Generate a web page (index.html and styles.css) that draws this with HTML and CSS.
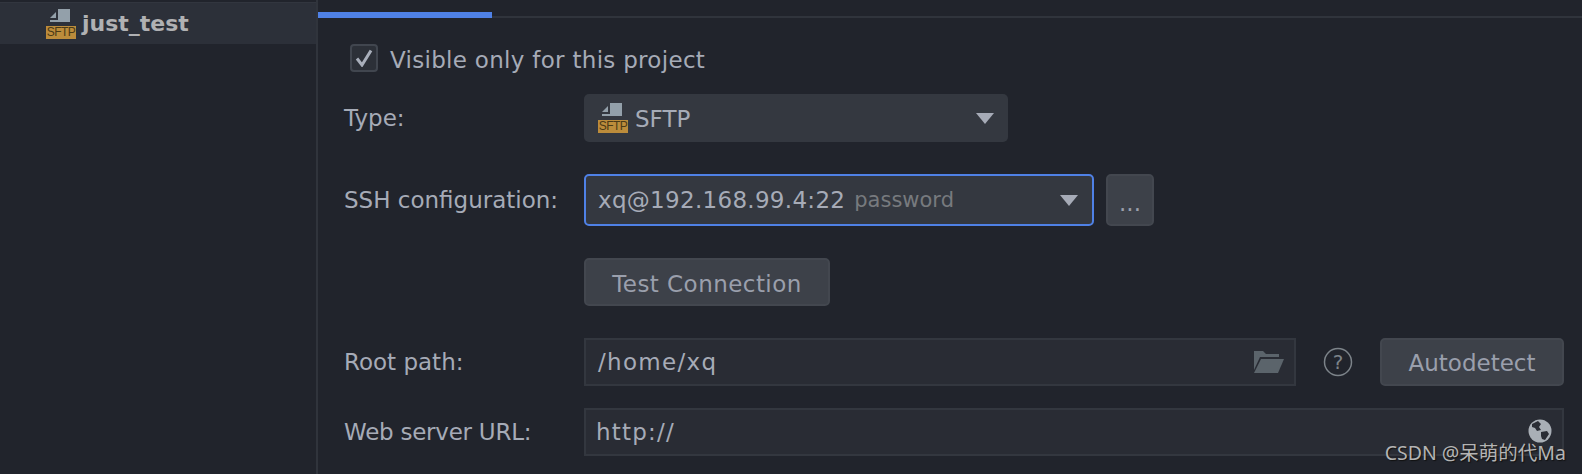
FILE: index.html
```html
<!DOCTYPE html>
<html lang="en">

<head>
    <meta charset="UTF-8" />
    <meta name="viewport" content="width=device-width, initial-scale=1.0" />
    <title>Deployment - just_test</title>
    <link rel="stylesheet" href="styles.css">
</head>

<body>
    <div class="window">
        <aside class="sidebar">
            <div class="server-row">
                <div class="icon-sftp">
                    <svg class="icon-doc" width="20" height="13" viewBox="0 0 20 13">
                        <path fill="#93a0aa" d="M8 0h12v13H0v-2h8z" />
                        <path fill="#93a0aa" d="M0 9l6-6v6z" />
                    </svg>
                    <span class="badge">SFTP</span>
                </div>
                <span class="server-name">just_test</span>
            </div>
        </aside>

        <main class="panel">
            <div class="tabs">
                <div class="tab-active"></div>
            </div>

            <div class="form">
                <label class="visible-row">
                    <span class="checkbox">
                        <svg width="18" height="18" viewBox="0 0 18 18">
                            <path d="M2 9.500l5 6.500L16 1.500" fill="none" stroke="#a9afbb" stroke-width="3" />
                        </svg>
                    </span>
                    <span class="visible-text">Visible only for this project</span>
                </label>

                <div class="row row-type">
                    <span class="label">Type:</span>
                    <div class="select select-type">
                        <div class="icon-sftp">
                            <svg class="icon-doc" width="20" height="13" viewBox="0 0 20 13">
                                <path fill="#93a0aa" d="M8 0h12v13H0v-2h8z" />
                                <path fill="#93a0aa" d="M0 9l6-6v6z" />
                            </svg>
                            <span class="badge">SFTP</span>
                        </div>
                        <span class="type-text">SFTP</span>
                        <span class="arrow"></span>
                    </div>
                </div>

                <div class="row row-ssh">
                    <span class="label">SSH configuration:</span>
                    <div class="select select-ssh">
                        <span class="host">xq@192.168.99.4:22</span>
                        <span class="muted">password</span>
                        <span class="arrow"></span>
                    </div>
                    <button class="btn btn-more">...</button>
                </div>

                <div class="row row-test">
                    <span class="label"></span>
                    <button class="btn btn-test">Test Connection</button>
                </div>

                <div class="row row-root">
                    <span class="label">Root path:</span>
                    <div class="input input-root">
                        <span class="path">/home/xq</span>
                        <svg class="field-icon" width="30" height="22" viewBox="0 0 30 22">
                            <path fill="#5b646b" d="M0 0h9l3 3h13v3H6L0 19z" />
                            <path fill="#5b646b" d="M7 8h23l-6 14H0z" />
                        </svg>
                    </div>
                    <svg class="help" width="30" height="30" viewBox="0 0 30 30">
                        <circle cx="15" cy="15" r="13.500" fill="none" stroke="#7c8389" stroke-width="1.500" />
                        <text x="15" y="22" text-anchor="middle" class="help-text">?</text>
                    </svg>
                    <button class="btn btn-auto">Autodetect</button>
                </div>

                <div class="row row-web">
                    <span class="label label-web">Web server URL:</span>
                    <div class="input input-web">
                        <span class="url">http://</span>
                        <svg class="field-icon globe" width="24" height="24" viewBox="0 0 24 24">
                            <circle cx="12" cy="12" r="11.500" fill="#a9afb6" />
                            <path fill="#2a2d35" d="M4 5l6-3 3 3-2 3 2 3-4 1-2-3-3-1zM13 13l6-1 2 3-4 6-3-1-1-3z" />
                        </svg>
                    </div>
                </div>
            </div>
        </main>
    </div>

    <div class="watermark">CSDN @呆萌的代Ma</div>
</body>

</html>
```

FILE: styles.css
```css
* {
    box-sizing: border-box;
}

html,
body {
    margin: 0;
    height: 100%;
    overflow: hidden;
}

body {
    background-color: #21242c;
    color: #a6abb7;
    font-family: "DejaVu Sans", sans-serif;
    font-size: 23px;
}

.window {
    display: flex;
    height: 474px;
}

/* left tree */
.sidebar {
    width: 318px;
    flex-shrink: 0;
    padding-top: 2px;
    border-right: 2px solid #30343c;
}

.server-row {
    display: flex;
    align-items: center;
    gap: 6px;
    height: 42px;
    padding-left: 46px;
    background-color: #2c3039;
    border-top: 1px solid #32363f;
}

/* server type icon: sheet above an orange tag */
.icon-sftp {
    display: flex;
    flex-direction: column;
    align-items: flex-end;
    justify-content: space-between;
    width: 30px;
    height: 30px;
    flex-shrink: 0;
}

.icon-doc {
    display: block;
    margin-right: 6px;
}

.badge {
    width: 30px;
    height: 13px;
    background-color: #bc8c3b;
    color: #4a3a17;
    font-family: "Liberation Sans", sans-serif;
    font-size: 12px;
    letter-spacing: -0.500px;
    line-height: 13px;
    text-align: center;
}

.server-name {
    font-weight: bold;
    font-size: 22px;
    color: #b0b1b3;
}

/* right side */
.panel {
    flex: 1;
    min-width: 0;
}

.tabs {
    height: 18px;
    padding-top: 12px;
    border-bottom: 2px solid #30343c;
}

.tab-active {
    width: 174px;
    height: 6px;
    background-color: #4f81e6;
}

.form {
    padding: 26px 18px 0 26px;
}

.visible-row {
    display: flex;
    align-items: center;
    gap: 12px;
    height: 28px;
    margin-left: 6px;
}

.visible-text {
    padding-top: 3px;
    letter-spacing: 0.300px;
}

.checkbox {
    display: flex;
    align-items: center;
    justify-content: center;
    width: 28px;
    height: 28px;
    background-color: #2c3038;
    border: 2px solid #41464f;
    border-radius: 4px;
}

.row {
    display: flex;
    align-items: center;
}

.label {
    width: 240px;
    flex-shrink: 0;
}

.label-web {
    letter-spacing: -0.250px;
}

.row-type {
    margin-top: 22px;
}

.row-ssh {
    margin-top: 32px;
}

.row-test {
    margin-top: 32px;
}

.row-root {
    margin-top: 32px;
}

.row-web {
    margin-top: 22px;
}

.select {
    display: flex;
    align-items: center;
    position: relative;
    background-color: #343840;
    border-radius: 5px;
}

.select-type {
    width: 424px;
    height: 48px;
    padding-left: 14px;
    gap: 7px;
}

.type-text {
    padding-top: 2px;
}

.select-ssh {
    width: 510px;
    height: 52px;
    padding-left: 12px;
    gap: 9px;
    border: 2px solid #4f81e6;
}

.host {
    letter-spacing: 0.300px;
}

.muted {
    font-size: 21px;
    color: #777a7e;
}

.arrow {
    margin-left: auto;
    margin-right: 14px;
    width: 0;
    height: 0;
    border-left: 9px solid transparent;
    border-right: 9px solid transparent;
    border-top: 11px solid #a6abb7;
}

.btn {
    font: inherit;
    color: #9a9fac;
    background-color: #3d4149;
    border: 2px solid #43474f;
    border-radius: 5px;
    padding: 0;
}

.btn-more {
    width: 48px;
    height: 52px;
    margin-left: 12px;
    padding-top: 5px;
}

.btn-test {
    width: 246px;
    height: 48px;
    padding-top: 3px;
    letter-spacing: 0.450px;
}

.btn-auto {
    width: 184px;
    height: 48px;
    padding-top: 2px;
    flex-shrink: 0;
}

.input {
    display: flex;
    align-items: center;
    justify-content: space-between;
    height: 48px;
    padding-left: 12px;
    padding-right: 10px;
    background-color: #292c34;
    border: 2px solid #33373f;
}

.input-root {
    width: 712px;
}

.path {
    letter-spacing: 1.300px;
}

.input-web {
    width: 980px;
    padding-left: 10px;
}

.url {
    letter-spacing: 1.200px;
}

.globe {
    margin-bottom: 2px;
}

.help {
    margin-left: 27px;
    margin-right: 27px;
    flex-shrink: 0;
}

.help-text {
    font-family: "DejaVu Sans", sans-serif;
    font-size: 20px;
    fill: #7c8389;
}

.watermark {
    position: absolute;
    right: 16px;
    top: 442px;
    font-family: "Noto Sans", "Noto Sans CJK SC", sans-serif;
    font-size: 19.500px;
    line-height: 22px;
    color: #b4b4b4;
    text-shadow: 1px 1px 1px #111;
}
```
